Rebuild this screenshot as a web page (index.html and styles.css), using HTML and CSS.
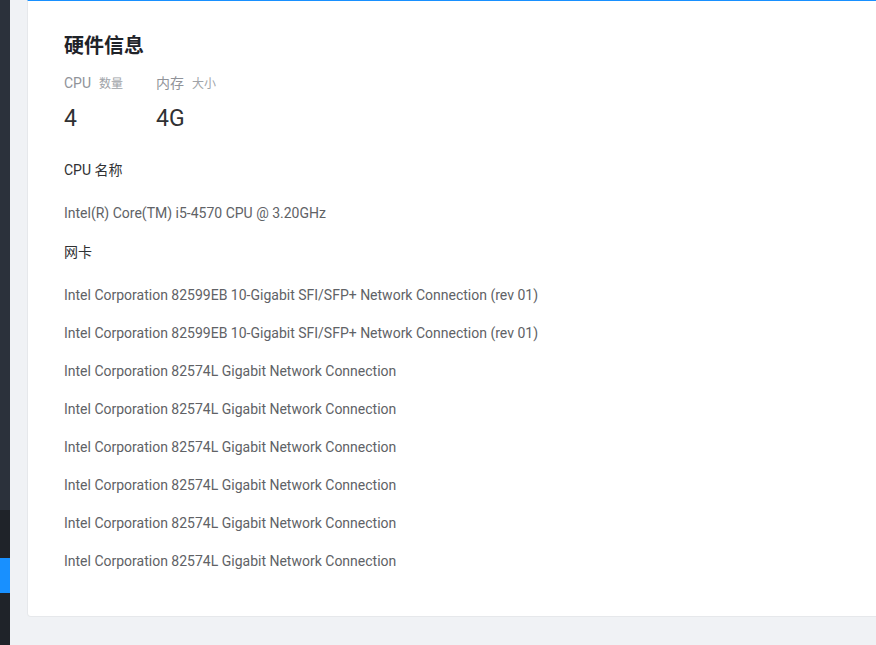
FILE: index.html
```html
<!DOCTYPE html>
<html lang="zh-CN">
<head>
  <meta charset="UTF-8">
  <meta name="viewport" content="width=device-width, initial-scale=1.0">
  <title>硬件信息</title>
  <link rel="stylesheet" href="styles.css">
</head>
<body>
  <div class="layout">
    <aside class="sidebar">
      <div class="sidebar-top"></div>
      <div class="sidebar-bottom">
        <div class="menu-item"></div>
        <div class="menu-item active"></div>
      </div>
    </aside>
    <main class="main">
      <div class="card">
        <h2 class="card-title">硬件信息</h2>
        <div class="stats">
          <div class="stat">
            <div class="stat-label">CPU<span class="unit">数量</span></div>
            <div class="stat-value">4</div>
          </div>
          <div class="stat">
            <div class="stat-label">内存<span class="unit">大小</span></div>
            <div class="stat-value">4G</div>
          </div>
        </div>

        <div class="section-title">CPU 名称</div>
        <div class="cpu-name">Intel(R) Core(TM) i5-4570 CPU @ 3.20GHz</div>

        <div class="section-title nic-title">网卡</div>
        <ul class="nic-list">
          <li>Intel Corporation 82599EB 10-Gigabit SFI/SFP+ Network Connection (rev 01)</li>
          <li>Intel Corporation 82599EB 10-Gigabit SFI/SFP+ Network Connection (rev 01)</li>
          <li>Intel Corporation 82574L Gigabit Network Connection</li>
          <li>Intel Corporation 82574L Gigabit Network Connection</li>
          <li>Intel Corporation 82574L Gigabit Network Connection</li>
          <li>Intel Corporation 82574L Gigabit Network Connection</li>
          <li>Intel Corporation 82574L Gigabit Network Connection</li>
          <li>Intel Corporation 82574L Gigabit Network Connection</li>
        </ul>
      </div>
    </main>
  </div>
</body>
</html>
```

FILE: styles.css
```css
html, body {
  margin: 0;
  height: 100%;
}
body {
  font-family: Roboto, "Noto Sans CJK SC", sans-serif;
  background-color: #f0f2f5;
  overflow: hidden;
}
.layout {
  display: flex;
  height: 100vh;
}
.sidebar {
  width: 10px;
  flex-shrink: 0;
  display: flex;
  flex-direction: column;
}
.sidebar-top {
  height: 510px;
  background-color: #2b313b;
}
.sidebar-bottom {
  flex: 1;
  background-color: #1f2329;
  padding-top: 48px;
}
.menu-item {
  height: 0;
}
.menu-item.active {
  height: 35px;
  background-color: #1890ff;
}
.main {
  flex: 1;
  padding-left: 17px;
  overflow: hidden;
}
.card {
  width: 1000px;
  background-color: #fff;
  border: 1px solid #e6e8eb;
  border-top: 1px solid #1890ff;
  border-radius: 0 0 4px 4px;
  padding: 31px 36px 36px;
}
.card-title {
  margin: 0;
  font-size: 20px;
  line-height: 28px;
  font-weight: bold;
  color: #1f2329;
}
.stats {
  display: flex;
  margin-top: 13px;
}
.stat {
  width: 92px;
}
.stat-label {
  font-size: 14px;
  line-height: 20px;
  color: #909399;
}
.stat-label .unit {
  font-size: 12px;
  margin-left: 8px;
  color: #a0a3a8;
}
.stat-value {
  margin-top: 10px;
  font-size: 23px;
  line-height: 30px;
  color: #303133;
}
.section-title {
  margin-top: 26px;
  font-size: 14px;
  line-height: 20px;
  color: #303133;
}
.cpu-name {
  margin-top: 23px;
  font-size: 14px;
  line-height: 20px;
  color: #606266;
}
.nic-title {
  margin-top: 19px;
}
.nic-list {
  list-style: none;
  margin: 14px 0 0;
  padding: 0;
}
.nic-list li {
  font-size: 14px;
  line-height: 38px;
  color: #606266;
}
```
